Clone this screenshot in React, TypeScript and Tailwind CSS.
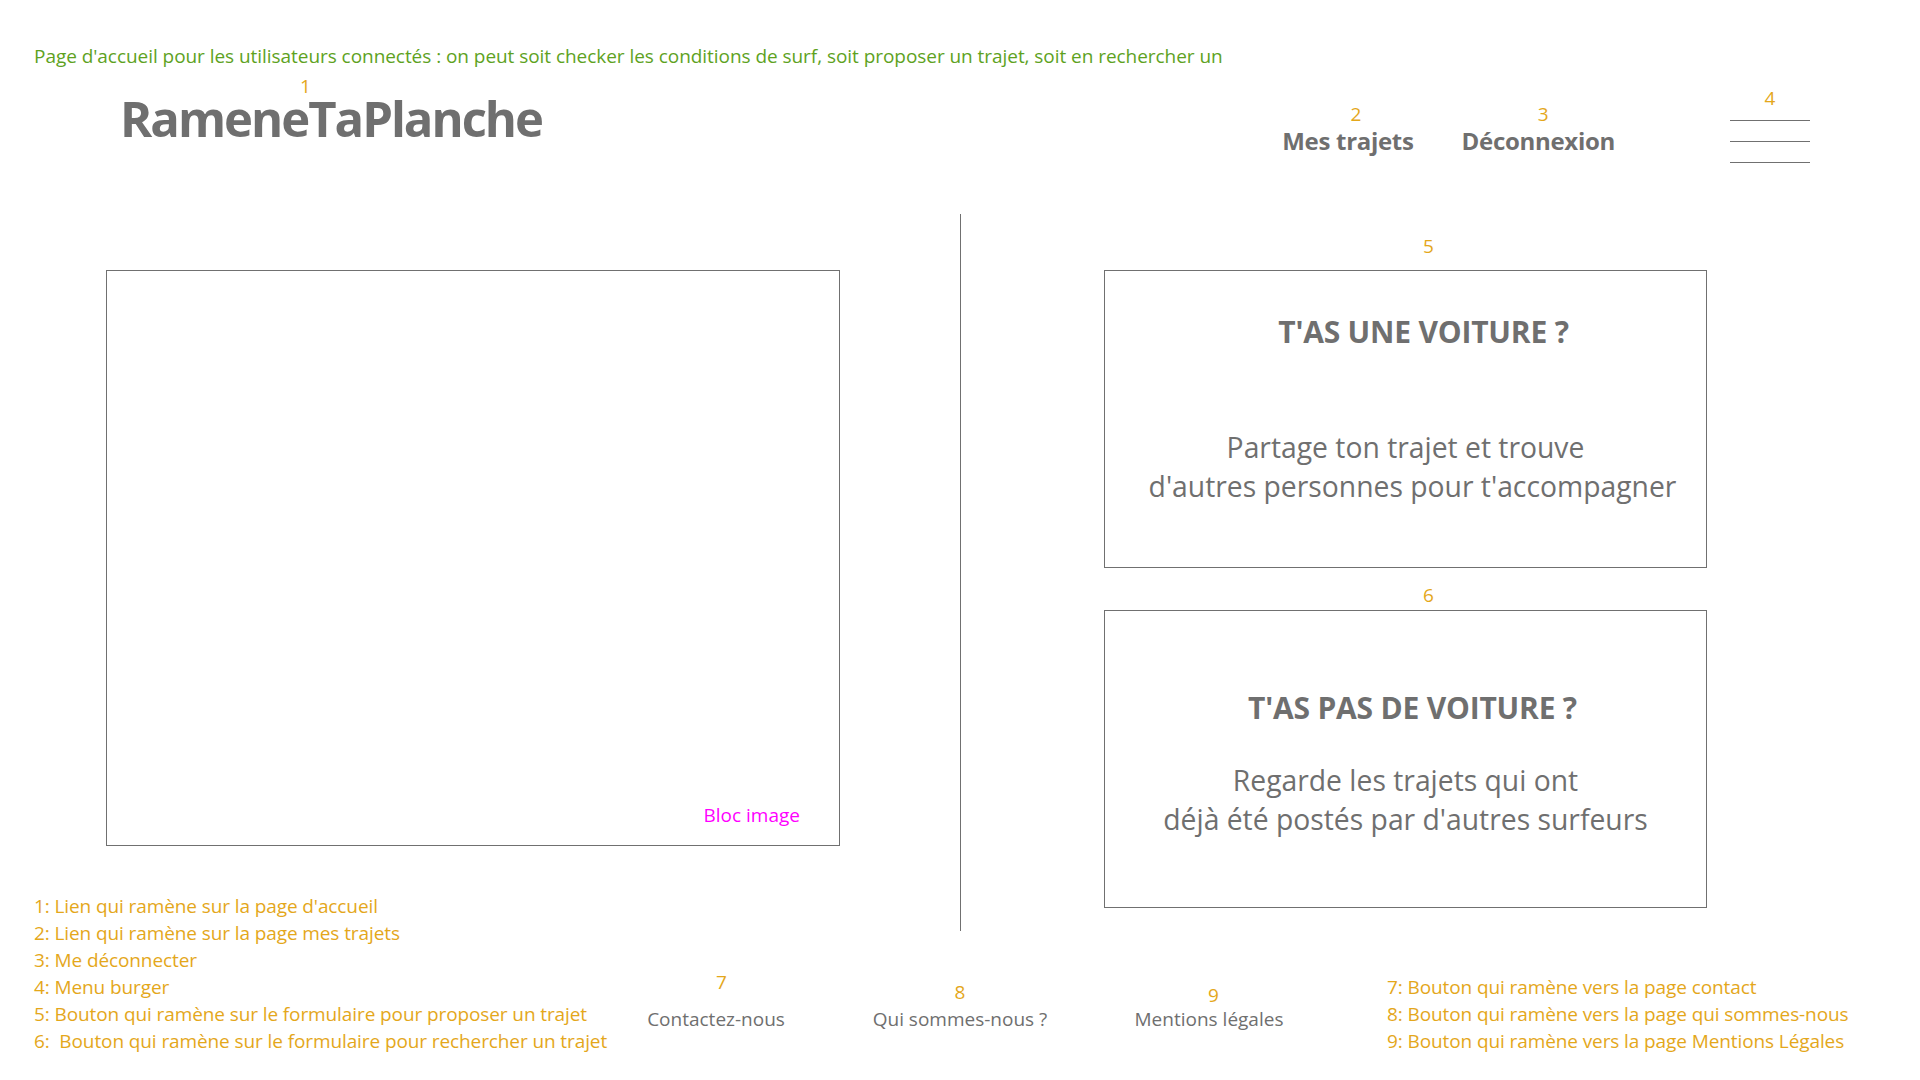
const orange = "text-[#e4a71b]";
const gray = "text-[#6f6f6f]";

const leftNotes = [
  "1: Lien qui ramène sur la page d'accueil",
  "2: Lien qui ramène sur la page mes trajets",
  "3: Me déconnecter",
  "4: Menu burger",
  "5: Bouton qui ramène sur le formulaire pour proposer un trajet",
  "6:  Bouton qui ramène sur le formulaire pour rechercher un trajet",
];

const rightNotes = [
  "7: Bouton qui ramène vers la page contact",
  "8: Bouton qui ramène vers la page qui sommes-nous",
  "9: Bouton qui ramène vers la page Mentions Légales",
];

function Num({ n, className = "" }: { n: string; className?: string }) {
  return (
    <span className={`block text-[19px] leading-[24px] ${orange} ${className}`}>
      {n}
    </span>
  );
}

function ChoiceCard({
  title,
  lines,
  pad,
  titleShift,
  gap,
  secondShift = "",
}: {
  title: string;
  lines: string[];
  pad: string;
  titleShift: string;
  gap: string;
  secondShift?: string;
}) {
  return (
    <button className={`w-[603px] h-[298px] border border-[#707070] flex flex-col items-center ${pad} ${gray}`}>
      <span className={`text-[30px] font-bold leading-[36px] tracking-[-0.2px] ${titleShift}`}>{title}</span>
      <span className={`${gap} flex flex-col items-center text-[28.3px] leading-[39px]`}>
        <span>{lines[0]}</span>
        <span className={secondShift}>{lines[1]}</span>
      </span>
    </button>
  );
}

function FooterLink({ n, label, gap, shift }: { n: string; label: string; gap: string; shift: string }) {
  return (
    <a className="w-[200px] flex flex-col items-center">
      <Num n={n} className={shift} />
      <span className={`${gap} text-[19px] leading-[24px] ${gray}`}>{label}</span>
    </a>
  );
}

export default function App() {
  return (
    <div
      className="w-[1920px] h-[1080px] bg-white overflow-hidden"
      style={{ fontFamily: '"Segoe UI", "Open Sans", sans-serif' }}
    >
      {/* note */}
      <p className="pt-[44px] pl-[34px] text-[19px] leading-[24px] text-[#5ea21e] tracking-[-0.05px]">
        Page d'accueil pour les utilisateurs connectés : on peut soit checker les conditions de surf, soit proposer un trajet, soit en rechercher un
      </p>

      {/* header */}
      <header className="h-[146px] flex items-start">
        <a className={`ml-[120px] mt-[9px] flex flex-col ${gray}`}>
          <span className={`block ml-[180px] text-[19px] leading-[18px] ${orange}`}>1</span>
          <span className="mt-[1px] text-[49px] font-bold leading-[44px] tracking-[-2px]">RameneTaPlanche</span>
        </a>
        <nav className={`ml-auto mt-[34px] flex items-start ${gray}`}>
          <a className="flex flex-col items-center">
            <Num n="2" className="ml-[16px]" />
            <span className="text-[24px] font-bold leading-[30px] tracking-[-0.3px]">Mes trajets</span>
          </a>
          <a className="ml-[48px] flex flex-col items-center">
            <Num n="3" className="ml-[10px]" />
            <span className="text-[24px] font-bold leading-[30px] tracking-[-0.3px]">Déconnexion</span>
          </a>
        </nav>
        <button className="ml-[115px] mr-[110px] mt-[18px] flex flex-col items-center">
          <Num n="4" />
          <span className="mt-[10px] flex flex-col gap-[20px] w-[80px]">
            <span className="h-px bg-[#707070]" />
            <span className="h-px bg-[#707070]" />
            <span className="h-px bg-[#707070]" />
          </span>
        </button>
      </header>

      {/* main */}
      <main className="flex items-start">
        <div className="ml-[106px] mt-[56px] w-[734px] h-[576px] border border-[#707070] flex items-end justify-end pr-[39px] pb-[18px]">
          <span className="text-[19px] leading-[24px] text-[#ff00ff]">Bloc image</span>
        </div>
        <div className="ml-[120px] w-px h-[717px] bg-[#707070]" />
        <div className="ml-[143px] pt-[20px] flex flex-col items-center">
          <Num n="5" className="ml-[46px]" />
          <div className="mt-[12px]">
            <ChoiceCard
              title="T'AS UNE VOITURE ?"
              pad="pt-[43px]"
              titleShift="ml-[36px]"
              gap="mt-[78px]"
              secondShift="ml-[14px]"
              lines={["Partage ton trajet et trouve", "d'autres personnes pour t'accompagner"]}
            />
          </div>
          <Num n="6" className="mt-[15px] ml-[46px]" />
          <div className="mt-[3px]">
            <ChoiceCard
              title="T'AS PAS DE VOITURE ?"
              pad="pt-[79px]"
              titleShift="ml-[14px]"
              gap="mt-[35px]"
              lines={["Regarde les trajets qui ont", "déjà été postés par d'autres surfeurs"]}
            />
          </div>
        </div>
      </main>

      {/* footer */}
      <footer className="-mt-[38px] flex items-end">
        <ul className={`w-[616px] shrink-0 pl-[34px] text-[19px] leading-[27px] tracking-[-0.1px] ${orange}`}>
          {leftNotes.map((t) => (
            <li key={t} className="whitespace-pre">
              {t}
            </li>
          ))}
        </ul>
        <nav className="mb-[24px] flex items-end">
          <FooterLink n="7" label="Contactez-nous" gap="mt-[13px]" shift="ml-[11px]" />
          <div className="ml-[44px]">
            <FooterLink n="8" label="Qui sommes-nous ?" gap="mt-[3px]" shift="" />
          </div>
          <div className="ml-[49px]">
            <FooterLink n="9" label="Mentions légales" gap="mt-0" shift="ml-[9px]" />
          </div>
        </nav>
        <ul className={`ml-[78px] text-[19px] leading-[27px] tracking-[-0.1px] ${orange}`}>
          {rightNotes.map((t) => (
            <li key={t}>{t}</li>
          ))}
        </ul>
      </footer>
    </div>
  );
}
